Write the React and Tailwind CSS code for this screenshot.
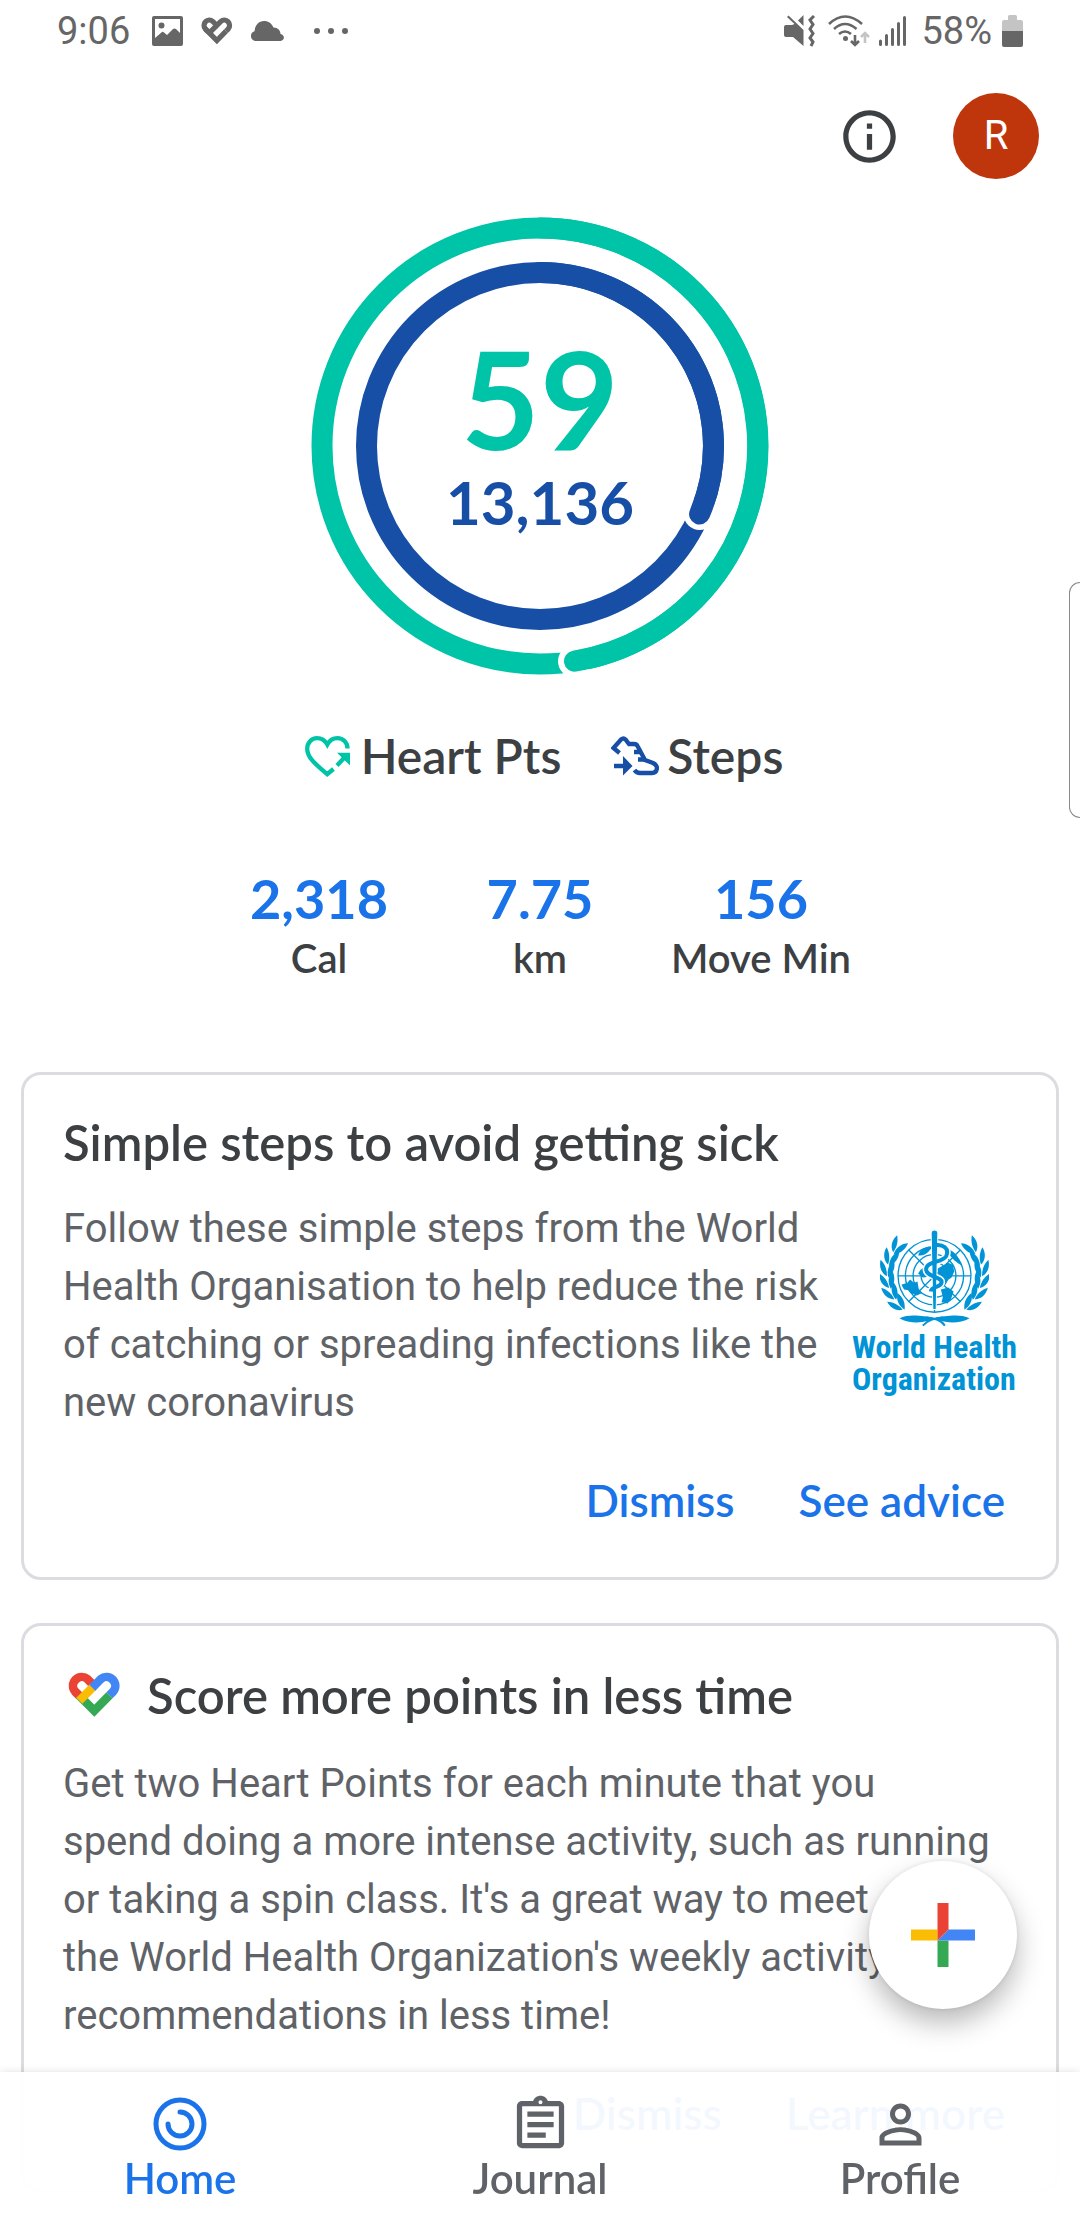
import React from "react";
import {
  MdInfoOutline,
  MdOutlineAssignment,
  MdPersonOutline,
} from "react-icons/md";

const FitHeart = ({ className, mono }) => (
  <svg viewBox="0 0 53 46" className={className} fill="none" strokeWidth="8.6">
    <path
      d="M7.1 19.5L26.3 38.7L41.5 23.3"
      stroke={mono ? "currentColor" : "#34a853"}
    />
    <path
      d="M25.5 13.1L19.5 7.1A8.8 8.8 0 0 0 7.1 19.5L11.2 23.6"
      stroke={mono ? "currentColor" : "#ea4335"}
    />
    <path
      d="M11.3 28.7L25 15"
      stroke={mono ? "currentColor" : "#fbbc04"}
    />
    <path
      d="M24.3 15.7L32.8 7.1A8.8 8.8 0 0 1 45.2 19.5L41.5 23.2"
      stroke={mono ? "currentColor" : "#4285f4"}
    />
  </svg>
);

function StatusBar() {
  return (
    <header className="flex h-[62px] items-center justify-between px-[57px] font-[Roboto,sans-serif] text-[38px] text-[#666]">
      <div className="flex items-center">
        <span>9:06</span>
        <svg viewBox="0 0 31 30" className="ml-[22px] h-[30px] w-[31px]">
          <path
            fill="currentColor"
            fillRule="evenodd"
            d="M2 0H29Q31 0 31 2V28Q31 30 29 30H2Q0 30 0 28V2Q0 0 2 0ZM3 3V22L10 16Q11 15.500 12 16.500L15 19L21 13Q22.500 12 24 13L28 17V3ZM6.500 9.500A3 3 0 1 0 12.500 9.500A3 3 0 1 0 6.500 9.500Z"
          />
        </svg>
        <FitHeart mono className="ml-[18px] h-[28px] w-[32px]" />
        <svg viewBox="0 0 34 20" className="ml-[17px] h-[20px] w-[34px]">
          <path
            fill="currentColor"
            d="M5 20A5 5 0 0 1 4.500 10.300C5 4 9 0 14 0C18.500 0 22 2.700 23.500 6.500C28 6.500 30.500 9.500 30.500 13C35.500 14 34.500 20 30.500 20Z"
          />
        </svg>
        <svg viewBox="0 0 34 6" className="ml-[30px] h-[6px] w-[34px]" fill="currentColor">
          <circle cx="3" cy="3" r="3" />
          <circle cx="17" cy="3" r="3" />
          <circle cx="31" cy="3" r="3" />
        </svg>
      </div>
      <div className="flex items-center">
        <svg viewBox="0 0 31 32" className="h-[32px] w-[31px]">
          <path
            fill="currentColor"
            d="M2 10H8L10.500 9L3 2L4.500 0.500L19.500 15V31L9 22H2Q0 22 0 20V12Q0 10 2 10ZM19.500 0V11L14 5.500Z"
          />
          <path
            fill="none"
            stroke="currentColor"
            strokeWidth="3"
            d="M30 1L26 5L29 9.500L26 14L29 18.500L26 23L29 27L27 31"
          />
        </svg>
        <svg viewBox="0 0 43 32" className="ml-[13px] h-[32px] w-[43px]" fill="none" stroke="currentColor" strokeWidth="2.600">
          <path d="M1 9Q17 -6 34 9M6 14Q17 4 28.500 14M11 19Q17 14 23 19" />
          <circle cx="17.500" cy="23.500" r="2.500" fill="currentColor" stroke="none" />
          <path d="M27 20V30M23 26L27 30L31 26" />
          <path d="M37 28V18M33 22L37 18L41 22" stroke="#c4c4c4" />
        </svg>
        <svg viewBox="0 0 27 30" className="ml-[8px] h-[30px] w-[27px]" stroke="currentColor" strokeWidth="3" strokeLinecap="round">
          <path d="M1.500 25V28.500M7.500 19.500V28.500M13.500 13.500V28.500M19.500 7.500V28.500M25.500 1.500V28.500" />
        </svg>
        <span className="ml-[15px]">58%</span>
        <svg viewBox="0 0 21 32" className="ml-[10px] h-[32px] w-[21px]">
          <path fill="#c4c4c4" d="M6 5V1.500Q6 0 7.500 0H13.500Q15 0 15 1.500V5H19Q21 5 21 7V16H0V7Q0 5 2 5Z" />
          <path fill="currentColor" d="M0 16H21V30Q21 32 19 32H2Q0 32 0 30Z" />
        </svg>
      </div>
    </header>
  );
}

function Rings() {
  return (
    <div className="mt-[38px] grid place-items-center">
      <svg
        viewBox="0 0 458 458"
        className="h-[458px] w-[458px] [grid-area:1/1]"
        fill="none"
        strokeWidth="21"
        strokeLinecap="round"
      >
        <circle cx="229" cy="229" r="218" stroke="#00c4a7" />
        <circle cx="263.500" cy="444.200" r="16.500" fill="#fff" />
        <path d="M229 11A218 218 0 0 1 263.500 444.200" stroke="#00c4a7" />
        <circle cx="229" cy="229" r="173.500" stroke="#174ea6" />
        <circle cx="388.600" cy="297" r="16" fill="#fff" />
        <path d="M229 55.500A173.500 173.500 0 0 1 388.600 297" stroke="#174ea6" />
      </svg>
      <div className="flex flex-col items-center gap-3 pb-3 font-bold [grid-area:1/1]">
        <span className="text-[136px] leading-[112px] text-[#00c4a7]">59</span>
        <span className="text-[60px] leading-[72px] text-[#174ea6]">13,136</span>
      </div>
    </div>
  );
}

function Legend() {
  return (
    <div className="mt-[51px] flex justify-center gap-[50px] pl-2 text-[48px] leading-[60px] text-[#3c4043]">
      <div className="flex items-center gap-[11px]">
        <svg viewBox="0 0 45 41" className="h-[41px] w-[45px]" fill="none" stroke="#00c4a7" strokeWidth="4.300">
          <path d="M42.500 12.500C42.500 6.500 38 2.200 32.500 2.200C28.500 2.200 24.500 4.500 22.300 8.500C20 4.500 16.200 2.200 12 2.200C6.500 2.200 2.200 6.500 2.200 13C2.200 21 9 27 22.200 38.200L28.500 33" />
          <path d="M32 29.500L40 21" />
          <path d="M32 16.700H45V29.500Z" fill="#00c4a7" stroke="none" />
        </svg>
        <span>Heart Pts</span>
      </div>
      <div className="flex items-center gap-[8px]">
        <svg viewBox="0 0 48 40" className="h-[40px] w-[48px]" fill="none" stroke="#174ea6" strokeWidth="4.300">
          <path d="M8.500 17L2.500 12L10 3.500Q12.500 1.500 14.500 3.500L18 8H23Q25.500 8 26.500 10L34 24L42 27Q46 29 46 32Q45.500 37 41 37H29Q25.500 37 23.500 34" />
          <path d="M23 16H30M27 23.500H34M3 30H14" />
          <path d="M12 20L21.500 30L12 39.500Z" fill="#174ea6" stroke="none" />
        </svg>
        <span>Steps</span>
      </div>
    </div>
  );
}

const stats = [
  { value: "2,318", label: "Cal" },
  { value: "7.75", label: "km" },
  { value: "156", label: "Move Min" },
];

function Stats() {
  return (
    <dl className="mx-auto mt-[80px] grid w-[663px] max-w-full grid-cols-3 text-center">
      {stats.map((item) => (
        <div key={item.label} className="flex flex-col-reverse">
          <dt className="text-[40px] leading-[52px] text-[#3c4043]">
            {item.label}
          </dt>
          <dd className="text-[54px] leading-[66px] font-bold text-[#1a73e8]">
            {item.value}
          </dd>
        </div>
      ))}
    </dl>
  );
}

// [x, y, rotation] of the leaf pairs on the left branch, top to bottom
const leaves = [
  [50, 50, 30],
  [29, 84, 12],
  [20, 118, -4],
  [22, 154, -18],
  [33, 190, -32],
  [54, 224, -46],
];

const Branch = () => (
  <g>
    {leaves.map(([x, y, r]) => (
      <g key={y} transform={`translate(${x} ${y}) rotate(${r})`}>
        <path d="M-1 20C-19 8 -22 -12 -16 -30C-5 -18 2 0 -1 20Z" />
        <path d="M3 24C-1 2 8 -16 24 -26C27 -6 20 12 3 24Z" />
      </g>
    ))}
    <path d="M58 264C82 252 112 256 132 258C144 259 156 261 164 265C144 276 92 284 58 264Z" />
  </g>
);

function WhoLogo() {
  return (
    <div className="flex shrink-0 flex-col items-center pb-2 text-[#0093d5]">
      <svg viewBox="0 0 326 290" className="h-[97px] w-[109px]" fill="currentColor">
        <g fill="none" stroke="currentColor" strokeWidth="4">
          <circle cx="163" cy="137" r="109" />
          <circle cx="163" cy="137" r="87" />
          <circle cx="163" cy="137" r="64" />
          <circle cx="163" cy="137" r="40" />
          <path d="M54 137H272M86 60L240 214M240 60L86 214M163 28V246" />
        </g>
        <path d="M64 164L82 158L90 148L102 158L112 154L116 178L126 188L110 196L94 190L84 180L72 178Z" />
        <path d="M172 116L188 106L204 98L218 104L222 124L214 142L202 150L192 164L176 150Z" />
        <path d="M182 178L204 172L220 184L212 208L202 220L184 216L188 200Z" />
        <path d="M114 76C120 58 138 48 156 52L144 66C136 74 126 78 114 76ZM206 58C224 64 236 80 244 106C228 98 214 84 206 72Z" />
        <path d="M122 118L144 108L146 140L128 142L114 130Z" />
        <Branch />
        <g transform="translate(326 0) scale(-1 1)">
          <Branch />
        </g>
        <path d="M188 262Q148 264 128 286M138 262Q178 264 194 286" fill="none" stroke="currentColor" strokeWidth="6" />
        <path
          d="M160 46C190 40 208 56 198 78C188 98 140 92 138 116C136 142 188 138 184 158C180 174 154 166 152 184"
          fill="none"
          stroke="#fff"
          strokeWidth="21"
        />
        <path d="M153 10Q153 0 163 0Q173 0 173 10L168 238H158Z" stroke="#fff" strokeWidth="3" />
        <path
          d="M160 46C190 40 208 56 198 78C188 98 140 92 138 116C136 142 188 138 184 158C180 174 154 166 152 184"
          fill="none"
          stroke="currentColor"
          strokeWidth="12"
        />
      </svg>
      <p className="mt-1 font-['Roboto_Condensed',Roboto,sans-serif] text-[32px] leading-[32px] font-bold">
        World Health
        <br />
        Organization
      </p>
    </div>
  );
}

function Card({ icon, title, image, actions, children }) {
  return (
    <section className="rounded-[20px] border-[3px] border-[#dadce0] px-[39px] pt-[37px] pb-[47px]">
      <div className="flex items-center gap-[26px]">
        {icon}
        <h2 className="text-[49px] leading-[60px] text-[#3c4043]">{title}</h2>
      </div>
      <div className="mt-[28px] flex items-center justify-between gap-5">
        <p className="font-[Roboto,sans-serif] text-[40px] leading-[58px] font-normal text-[#5f6368]">
          {children}
        </p>
        {image}
      </div>
      <div className="mt-[38px] flex justify-end gap-10 text-[44px] leading-[60px] text-[#1a73e8]">
        {actions.map((action) => (
          <button key={action} type="button" className="px-3">
            {action}
          </button>
        ))}
      </div>
    </section>
  );
}

function NavBar() {
  return (
    <nav className="fixed inset-x-0 bottom-0 grid grid-cols-3 bg-white/95 pt-[22px] pb-[18px] text-[42px] leading-[48px] text-[#5f6368] shadow-[0_0_8px_rgba(0,0,0,0.12)]">
      <a href="#home" className="flex flex-col items-center text-[#1a73e8]">
        <span className="flex h-[60px] items-center">
          <svg viewBox="0 0 54 54" className="size-[54px]" fill="none" stroke="currentColor" strokeWidth="5" strokeLinecap="round">
            <circle cx="27" cy="27" r="24" />
            <path d="M27 15A12 12 0 1 1 15 27" />
          </svg>
        </span>
        Home
      </a>
      <a href="#journal" className="flex flex-col items-center">
        <span className="flex h-[60px] items-center">
          <MdOutlineAssignment className="size-[63px]" />
        </span>
        Journal
      </a>
      <a href="#profile" className="flex flex-col items-center">
        <span className="flex h-[60px] items-center">
          <MdPersonOutline className="size-[63px]" />
        </span>
        Profile
      </a>
    </nav>
  );
}

export default function App() {
  return (
    <div className="relative min-h-screen overflow-hidden bg-white font-[Lato,sans-serif] font-semibold">
      <div className="font-normal">
        <StatusBar />
        <div className="mt-[31px] flex items-center justify-end gap-[52px] pr-[41px]">
          <button type="button" aria-label="Info" className="text-[#3c4043]">
            <MdInfoOutline className="size-[63px]" />
          </button>
          <button
            type="button"
            aria-label="Account"
            className="size-[86px] rounded-full bg-[#bf360c] font-[Roboto,sans-serif] text-[40px] text-white"
          >
            R
          </button>
        </div>
      </div>

      <main>
        <Rings />
        <Legend />
        <Stats />
        <div className="mt-[88px] flex flex-col gap-[43px] px-[21px]">
          <Card
            title="Simple steps to avoid getting sick"
            image={<WhoLogo />}
            actions={["Dismiss", "See advice"]}
          >
            Follow these simple steps from the World Health Organisation to help
            reduce the risk of catching or spreading infections like the new
            coronavirus
          </Card>
          <Card
            icon={<FitHeart className="my-[9px] ml-[5px] h-[46px] w-[53px]" />}
            title="Score more points in less time"
            actions={["Dismiss", "Learn more"]}
          >
            Get two Heart Points for each minute that you
            <br />
            spend doing a more intense activity, such as running
            <br />
            or taking a spin class. It's a great way to meet
            <br />
            the World Health Organization's weekly activity
            <br />
            recommendations in less time!
          </Card>
        </div>
      </main>

      {/* edge panel handle */}
      <div className="absolute top-[582px] right-0 h-[236px] w-[11px] rounded-l-[14px] border border-r-0 border-[#8a8a8a]" />

      <button
        type="button"
        aria-label="Add"
        className="fixed right-[63px] bottom-[211px] grid size-[148px] place-items-center rounded-full bg-white shadow-[0_14px_28px_rgba(0,0,0,0.28),0_0_5px_rgba(0,0,0,0.1)]"
      >
        <svg viewBox="0 0 64 64" className="size-[64px]">
          <path fill="#fbbc04" d="M0 26.500H26.500V37.500H0Z" />
          <path fill="#34a853" d="M26.500 37.500H37.500V64H26.500Z" />
          <path fill="#4285f4" d="M37.500 26.500H64V37.500H26.500Z" />
          <path fill="#ea4335" d="M26.500 0H37.500V26.500L26.500 37.500Z" />
        </svg>
      </button>
      <NavBar />
    </div>
  );
}
